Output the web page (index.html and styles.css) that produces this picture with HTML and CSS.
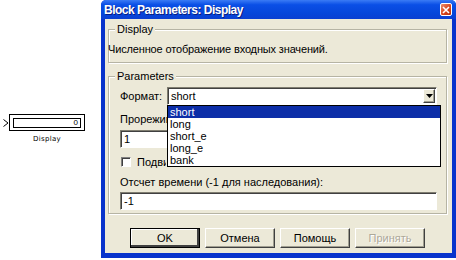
FILE: index.html
```html
<!DOCTYPE html>
<html lang="ru">
<head>
    <meta charset="UTF-8">
    <title>Block Parameters: Display</title>
    <link rel="stylesheet" href="styles.css">
</head>
<body>
<div class="screen">
    <div class="canvas">
        <div class="block">
            <svg class="port" width="6" height="8" viewBox="0 0 6 8"><path d="M0.5 0.5 L5 4 L0.5 7.5" fill="none" stroke="#000" stroke-width="1"/></svg>
            <div class="block-box"><div class="block-value">0</div></div>
            <div class="block-name">Display</div>
        </div>
    </div>

    <div class="dialog">
        <div class="titlebar">
            <span class="title">Block Parameters: Display</span>
            <span class="close">
                <svg width="8" height="8" viewBox="0 0 8 8"><path d="M1 1 L7 7 M7 1 L1 7" stroke="#fff" stroke-width="1.6"/></svg>
            </span>
        </div>
        <div class="dialog-body">
            <div class="group group-desc">
                <span class="group-title">Display</span>
                <p class="desc">Численное отображение входных значений.</p>
            </div>

            <div class="group group-params">
                <span class="group-title">Parameters</span>
                <div class="row-format">
                    <span class="row-label">Формат:</span>
                    <div class="combo">
                        <span class="combo-value">short</span>
                        <span class="combo-btn">
                            <svg width="7" height="4" viewBox="0 0 7 4"><path d="M0 0 H7 L3.5 4 Z" fill="#000"/></svg>
                        </span>
                        <ul class="combo-list">
                            <li class="selected">short</li>
                            <li>long</li>
                            <li>short_e</li>
                            <li>long_e</li>
                            <li>bank</li>
                        </ul>
                    </div>
                </div>
                <div class="field-label lbl-decim"><span class="clip">Прореживание:</span></div>
                <div class="edit edit-decim">1</div>
                <div class="check"><span class="checkbox"></span><span class="clip clip-check">Подвижное окно</span></div>
                <div class="field-label lbl-time">Отсчет времени (-1 для наследования):</div>
                <div class="edit edit-time">-1</div>
            </div>

            <div class="buttons">
                <span class="btn btn-default">OK</span>
                <span class="btn">Отмена</span>
                <span class="btn">Помощь</span>
                <span class="btn btn-disabled">Принять</span>
            </div>
        </div>
    </div>
</div>
</body>
</html>
```

FILE: styles.css
```css
*{
    margin: 0;
    padding: 0;
    box-sizing: border-box;
}
ul{
    list-style: none;
}
body{
    background: #fff;
    font-family: "Liberation Sans", Arial, sans-serif;
    font-size: 11px;
    color: #000;
}
.screen{
    display: flex;
    width: 456px;
    height: 260px;
    background: #fff;
}

/* simulink canvas */
.canvas{
    width: 101px;
    position: relative;
}
.block{
    position: absolute;
    left: 9px;
    top: 114px;
    width: 76px;
}
.port{
    position: absolute;
    left: -6px;
    top: 5px;
}
.block-box{
    height: 17px;
    border: 1px solid #000;
    padding: 3px;
}
.block-value{
    height: 10px;
    border: 1px solid #000;
    font-size: 8px;
    line-height: 8px;
    text-align: right;
    padding-right: 2px;
}
.block-name{
    text-align: center;
    font-family: "DejaVu Sans", sans-serif;
    font-size: 7px;
    margin-top: 4px;
    letter-spacing: 0.3px;
}

/* dialog */
.dialog{
    width: 355px;
    height: 258px;
    display: flex;
    flex-direction: column;
    background: #0833CC;
    border-radius: 5px 5px 0 0;
}
.titlebar{
    height: 19px;
    display: flex;
    align-items: center;
    padding: 0 4px 0 3px;
    background: linear-gradient(#3A7BF5, #0A4FE6 25%, #0646DA 70%, #0A3FD2);
    border-radius: 5px 5px 0 0;
}
.title{
    color: #fff;
    font-weight: bold;
    font-size: 12px;
    letter-spacing: -0.5px;
    text-shadow: 1px 1px #0A1E80;
}
.close{
    margin-left: auto;
    width: 12px;
    height: 13px;
    display: flex;
    align-items: center;
    justify-content: center;
    background: linear-gradient(135deg, #E98E6E, #D8441C 55%, #B5300E);
    border: 1px solid #fff;
    border-radius: 2px;
}
.dialog-body{
    flex: 1;
    margin: 0 4px 5px 4px;
    background: #ECE9D8;
    padding: 10px 5px 0 3px;
}

.group{
    position: relative;
    border: 1px solid #B6B4A4;
    box-shadow: inset 1px 1px #fff, 1px 1px #fff;
}
.group-title{
    position: absolute;
    top: -7px;
    left: 6px;
    padding: 0 2px;
    background: #ECE9D8;
    line-height: 13px;
}
.group-desc{
    height: 34px;
    padding: 13px 0 0 0;
}
.desc{
    line-height: 13px;
    margin-left: -1px;
    letter-spacing: -0.15px;
}
.group-params{
    margin-top: 13px;
    padding: 10px 9px 3px 11px;
}

.row-format{
    display: flex;
    align-items: center;
    height: 18px;
}
.row-label{
    width: 47px;
}
.combo{
    position: relative;
    flex: 1;
    height: 18px;
    display: flex;
    align-items: center;
    background: #fff;
    border: 1px solid;
    border-color: #7F7D70 #fff #fff #7F7D70;
    box-shadow: inset 1px 1px #404040;
    padding: 1px 1px 1px 3px;
}
.combo-value{
    flex: 1;
}
.combo-btn{
    width: 12px;
    height: 14px;
    display: flex;
    align-items: center;
    justify-content: center;
    background: #ECE9D8;
    border: 1px solid;
    border-color: #fff #404040 #404040 #fff;
    box-shadow: inset -1px -1px #A09E90;
}
.combo-list{
    position: absolute;
    left: -1px;
    top: 17px;
    width: 274px;
    background: #fff;
    border: 1px solid #000;
    z-index: 1;
}
.combo-list li{
    height: 12px;
    line-height: 12px;
    padding-left: 2px;
}
.combo-list .selected{
    background: #0C2EA8;
    color: #fff;
}

/* labels partly hidden by the open list */
.clip{
    display: inline-block;
    width: 47px;
    overflow: hidden;
    white-space: nowrap;
    vertical-align: top;
}
.clip-check{
    width: 29px;
}

.field-label{
    line-height: 13px;
}
.lbl-decim{
    margin-top: 8px;
}
.lbl-time{
    margin-top: 8px;
}
.edit{
    height: 18px;
    line-height: 14px;
    background: #fff;
    border: 1px solid;
    border-color: #7F7D70 #fff #fff #7F7D70;
    box-shadow: inset 1px 1px #404040;
    padding: 1px 3px;
}
.edit-decim{
    margin-top: 4px;
}
.edit-time{
    margin-top: 3px;
}
.check{
    display: flex;
    align-items: center;
    height: 13px;
    margin-top: 7px;
    padding-left: 1px;
}
.checkbox{
    width: 10px;
    height: 10px;
    margin-right: 6px;
    background: #fff;
    border: 1px solid;
    border-color: #808080 #fff #fff #808080;
    box-shadow: inset 1px 1px #404040;
}

.buttons{
    display: flex;
    gap: 5px;
    margin-top: 14px;
    padding-left: 22px;
}
.btn{
    width: 70px;
    height: 20px;
    display: flex;
    align-items: center;
    justify-content: center;
    background: #ECE9D8;
    border: 1px solid;
    border-color: #fff #404040 #404040 #fff;
    box-shadow: inset -1px -1px #A09E90;
}
.btn-default{
    outline: 1px solid #000;
    outline-offset: -1px;
    box-shadow: inset -2px -2px #404040, inset 1px 1px #fff;
}
.btn-disabled{
    color: #ACA899;
    text-shadow: 1px 1px #fff;
}
```
